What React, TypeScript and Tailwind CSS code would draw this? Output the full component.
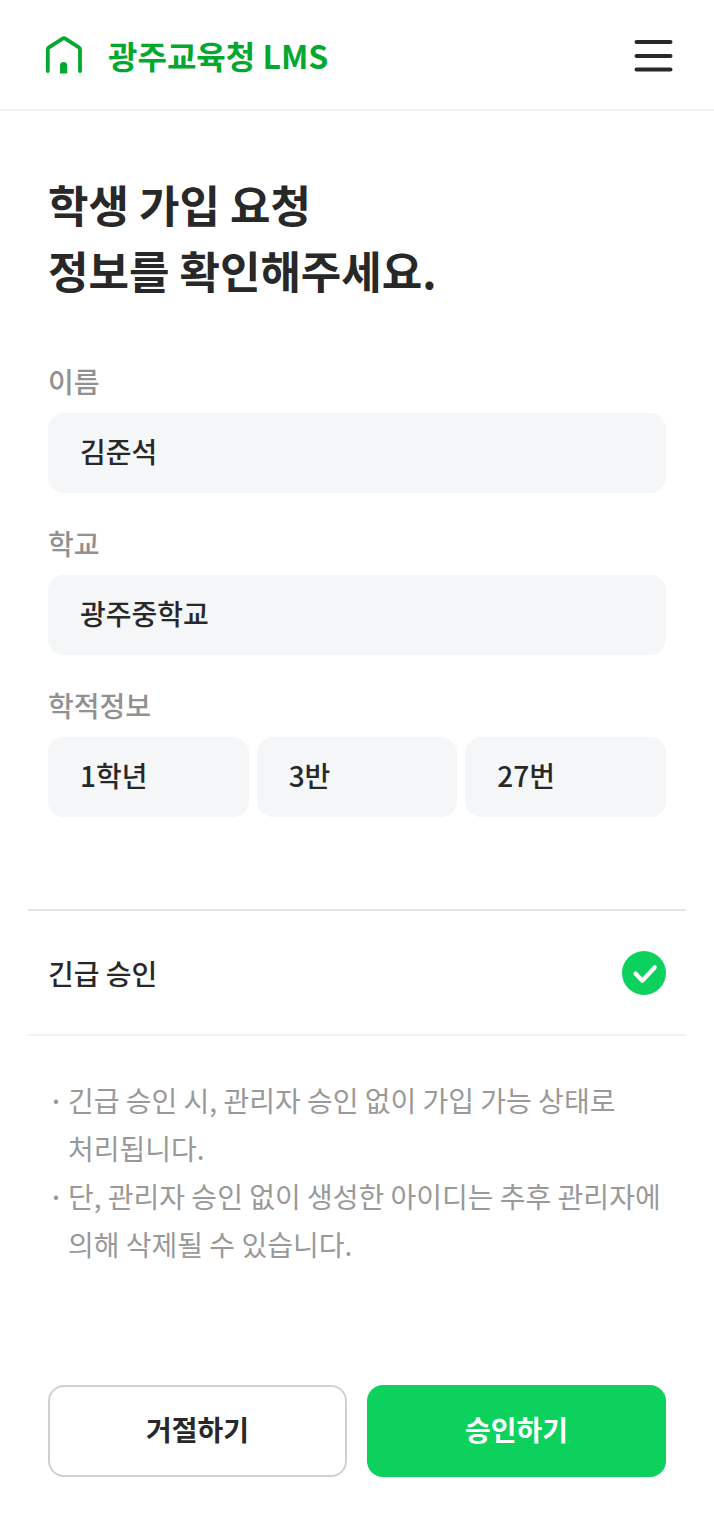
import { useState } from 'react';

const fields = [
  { id: 'name', label: '이름', value: '김준석' },
  { id: 'school', label: '학교', value: '광주중학교' },
];

const classInfo = [
  { label: '학년', value: '1학년' },
  { label: '반', value: '3반' },
  { label: '번호', value: '27번' },
];

const notices = [
  '긴급 승인 시, 관리자 승인 없이 가입 가능 상태로 처리됩니다.',
  '단, 관리자 승인 없이 생성한 아이디는 추후 관리자에 의해 삭제될 수 있습니다.',
];

const labelClass = 'mb-2.5 block text-[28px] leading-[44px] font-medium text-[#919191]';
const inputClass =
  'h-20 w-full min-w-0 rounded-2xl bg-[#f4f6f8] px-8 pb-1 text-[28px] font-medium text-[#282828] outline-none';

const LogoIcon = () => (
  <svg width="40" height="40" viewBox="0 0 40 40" fill="none" aria-hidden="true">
    <path
      d="M3.800 36V14.500a2.500 2.500 0 0 1 1.200-2.100L18.600 3.700a2.500 2.500 0 0 1 2.700 0L34.800 12.400a2.500 2.500 0 0 1 1.200 2.100V36"
      stroke="#03a82f"
      strokeWidth="3.8"
      strokeLinecap="round"
      strokeLinejoin="round"
    />
    <path d="M16 38.500v-8a3.600 3.600 0 0 1 7.200 0v8Z" fill="#03a82f" />
  </svg>
);

const Header = () => (
  <header className="flex h-[111px] items-center justify-between border-b-2 border-[#f2f2f2] px-10">
    <a href="#" className="flex items-center gap-6 pl-1">
      <LogoIcon />
      <span className="text-[32px] font-bold text-[#03a82f]">광주교육청 LMS</span>
    </a>
    <button type="button" aria-label="메뉴">
      <svg width="40" height="40" viewBox="0 0 40 40" fill="none" aria-hidden="true">
        <path d="M2.500 7h34M2.500 21h34M2.500 34.500h34" stroke="#282828" strokeWidth="4" strokeLinecap="round" />
      </svg>
    </button>
  </header>
);

export default function App() {
  const [urgent, setUrgent] = useState(true);

  return (
    <div className="bg-white font-['Noto_Sans_CJK_KR','Noto_Sans',sans-serif] text-[#282828] break-keep">
      <Header />
      <main className="px-12 pt-15 pb-12">
        <h1 className="text-[44px] leading-[66px] font-bold">
          학생 가입 요청
          <br />
          정보를 확인해주세요.
        </h1>

        <form onSubmit={(e) => e.preventDefault()}>
          <div className="mt-14 grid gap-7">
            {fields.map((field) => (
              <div key={field.id}>
                <label htmlFor={field.id} className={labelClass}>
                  {field.label}
                </label>
                <input id={field.id} className={inputClass} defaultValue={field.value} readOnly />
              </div>
            ))}
            <fieldset>
              <legend className={labelClass}>학적정보</legend>
              <div className="grid grid-cols-3 gap-2">
                {classInfo.map((item) => (
                  <input
                    key={item.label}
                    aria-label={item.label}
                    className={inputClass}
                    defaultValue={item.value}
                    readOnly
                  />
                ))}
              </div>
            </fieldset>
          </div>

          <div className="-mx-5 mt-[92px] border-t-2 border-b-2 border-t-[#e5e5e5] border-b-[#f2f2f2]">
            <label className="flex h-[123px] items-center justify-between px-5 text-[28px] font-medium">
              긴급 승인
              <span className="relative block size-11">
                <input
                  type="checkbox"
                  className="block size-11 appearance-none rounded-full bg-[#d4d4d4] checked:bg-[#0cd25d]"
                  checked={urgent}
                  onChange={(e) => setUrgent(e.target.checked)}
                />
                <svg
                  className="pointer-events-none absolute inset-0"
                  width="44"
                  height="44"
                  viewBox="0 0 44 44"
                  fill="none"
                  aria-hidden="true"
                >
                  <path
                    d="m13.500 22.500 6.800 7.200 12.500-13.500"
                    stroke="white"
                    strokeWidth="4.2"
                    strokeLinecap="round"
                    strokeLinejoin="round"
                  />
                </svg>
              </span>
            </label>
          </div>

          <ul className="mt-10 text-[28px] leading-[48px] text-[#999999]">
            {notices.map((notice) => (
              <li key={notice} className="flex">
                <span className="w-5 shrink-0 font-medium">·</span>
                <p>{notice}</p>
              </li>
            ))}
          </ul>

          <div className="mt-[117px] grid grid-cols-2 gap-5 text-[28px] font-bold">
            <button type="button" className="h-[92px] rounded-2xl border-2 border-[#d0d0d0] bg-white pb-1">
              거절하기
            </button>
            <button type="submit" className="h-[92px] rounded-2xl bg-[#0cd25d] pb-1 text-white">
              승인하기
            </button>
          </div>
        </form>
      </main>
    </div>
  );
}
